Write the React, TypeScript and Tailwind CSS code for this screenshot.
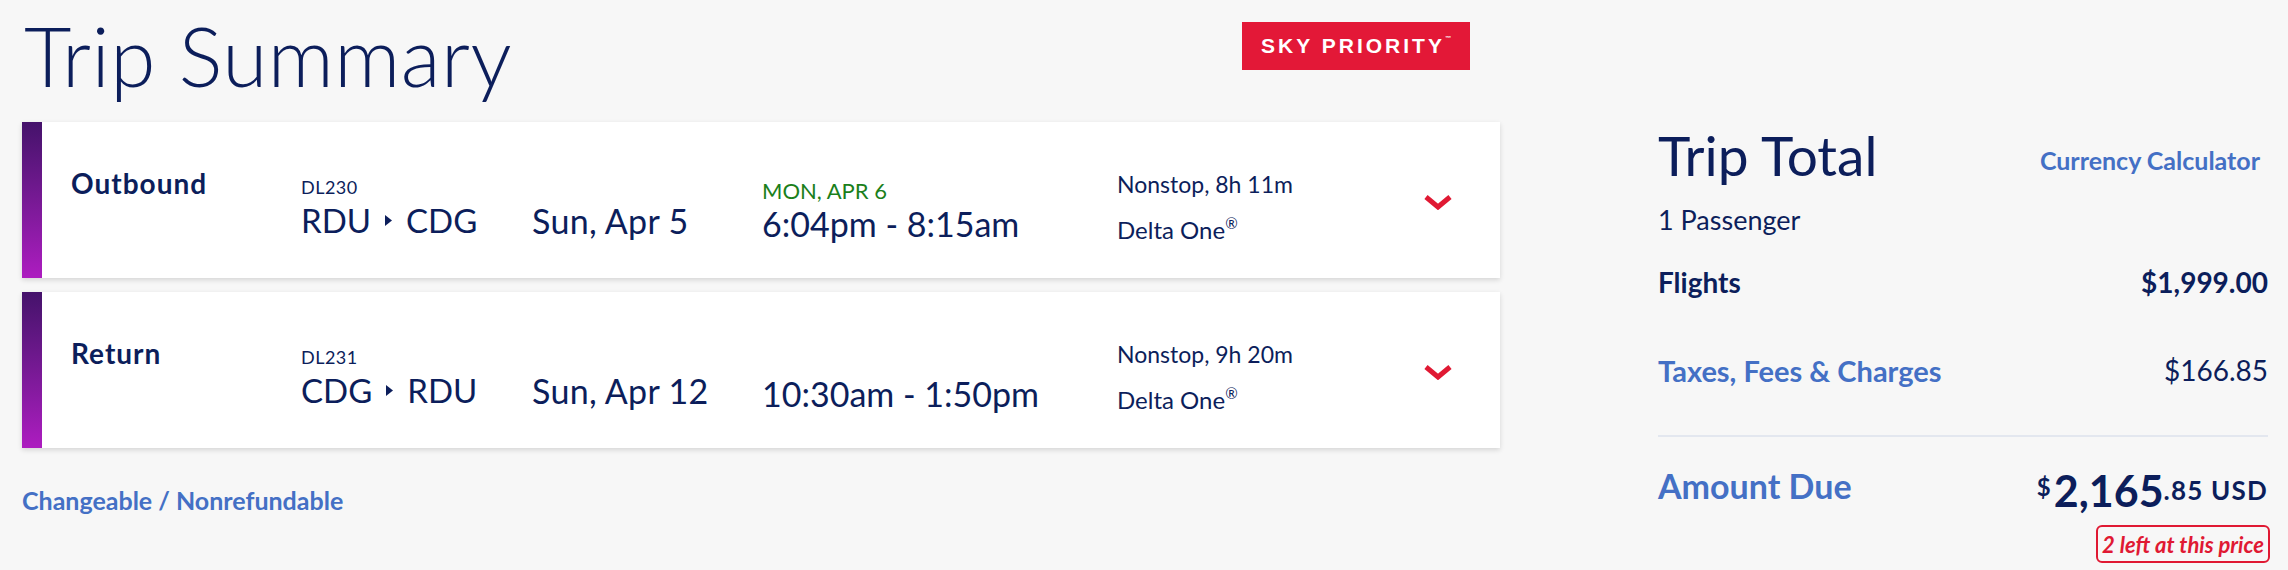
import React from "react";

function Chevron() {
  return (
    <svg width="30" height="16" viewBox="0 0 30 16">
      <polyline points="3,3 15,13 27,3" fill="none" stroke="#e01933" strokeWidth="5" strokeLinecap="butt" strokeLinejoin="miter" />
    </svg>
  );
}

function Arrow() {
  return (
    <svg width="7" height="11" viewBox="0 0 7 11" className="mx-[14px]">
      <polygon points="0,0 7,5.5 0,11" fill="#0c1e5b" />
    </svg>
  );
}

type CardProps = {
  label: string;
  flight: string;
  from: string;
  to: string;
  date: string;
  arrival?: string;
  time: string;
  info: string;
};

function FlightCard({ label, flight, from, to, date, arrival, time, info }: CardProps) {
  return (
    <div className="h-[156px] bg-white flex shadow-[0_2px_5px_rgba(0,0,0,0.14)]">
      <div className="w-[20px] shrink-0 bg-linear-to-b from-[#45126b] to-[#ad1cc0]" />
      <div className="ml-[29px] w-[230px] pt-[47px] text-[28px] leading-none font-bold tracking-[1px]">{label}</div>
      <div className="w-[231px] pt-[56px]">
        <div className="text-[18px] leading-none tracking-[0.5px]">{flight}</div>
        <div className="mt-[8px] text-[33px] leading-none flex items-center">
          <span>{from}</span>
          <Arrow />
          <span>{to}</span>
        </div>
      </div>
      <div className="w-[230px] pt-[82px] text-[34px] leading-none tracking-[0.3px]">{date}</div>
      <div className={arrival ? "w-[355px] pt-[58px]" : "w-[355px] pt-[85px]"}>
        {arrival && <div className="text-[22px] leading-none text-[#1b7f1b]">{arrival}</div>}
        <div className={arrival ? "mt-[5px] text-[34px] leading-none" : "text-[34px] leading-none"}>{time}</div>
      </div>
      <div className="w-[306px] pt-[51px]">
        <div className="text-[23px] leading-none">{info}</div>
        <div className="mt-[22px] text-[24px] leading-none">
          Delta One<span className="text-[15px] align-top relative top-[-2px]">®</span>
        </div>
      </div>
      <div className="pt-[72px]">
        <Chevron />
      </div>
    </div>
  );
}

export default function App() {
  return (
    <div className="w-[2288px] h-[570px] bg-[#f7f7f7] flex overflow-hidden text-[#0c1e5b] font-['Lato','Noto_Sans',sans-serif]">
      <div className="w-[1500px] shrink-0 pl-[22px] flex flex-col">
        <div className="h-[122px] flex items-start">
          <h1 className="pt-[14px] pl-[2px] text-[82px] leading-none font-light tracking-[0.5px]">Trip Summary</h1>
          <div className="ml-auto mr-[30px] mt-[22px] h-[48px] w-[228px] bg-[#e31837] flex items-center justify-center text-white font-bold text-[21px] tracking-[3px] font-['Liberation_Sans',sans-serif]">
            SKY PRIORITY<span className="text-[6px] self-start mt-[12px] tracking-normal">™</span>
          </div>
        </div>
        <FlightCard
          label="Outbound"
          flight="DL230"
          from="RDU"
          to="CDG"
          date="Sun, Apr 5"
          arrival="MON, APR 6"
          time="6:04pm - 8:15am"
          info="Nonstop, 8h 11m"
        />
        <div className="mt-[14px]">
          <FlightCard
            label="Return"
            flight="DL231"
            from="CDG"
            to="RDU"
            date="Sun, Apr 12"
            time="10:30am - 1:50pm"
            info="Nonstop, 9h 20m"
          />
        </div>
        <div className="mt-[40px] text-[25px] leading-none font-bold text-[#4470c5]">Changeable / Nonrefundable</div>
      </div>

      <div className="ml-[158px] w-[610px] shrink-0 flex flex-col">
        <div className="pt-[128px] flex items-start justify-between">
          <div className="text-[55px] leading-none">Trip Total</div>
          <div className="mt-[20px] mr-[8px] text-[25px] leading-none font-bold text-[#4470c5]">Currency Calculator</div>
        </div>
        <div className="mt-[23px] text-[27px] leading-none">1 Passenger</div>
        <div className="mt-[35px] flex justify-between text-[28px] leading-none font-bold">
          <span>Flights</span>
          <span>$1,999.00</span>
        </div>
        <div className="mt-[60px] flex justify-between text-[28px] leading-none">
          <span className="font-bold text-[#4470c5] text-[29px]">Taxes, Fees &amp; Charges</span>
          <span>$166.85</span>
        </div>
        <div className="mt-[50px] h-[2px] bg-[#e3e7ef]" />
        <div className="pt-[32px] flex justify-between items-start">
          <span className="text-[34px] leading-none font-bold text-[#4470c5]">Amount Due</span>
          <div className="flex flex-col items-end">
            <div className="flex items-start font-bold">
              <span className="mt-[6px] mr-[3px] text-[24px] leading-none">$</span>
              <span className="text-[43px] leading-none">2,165</span>
              <span className="mt-[8px] text-[26px] leading-none tracking-[1.2px]">.85 USD</span>
            </div>
            <div className="mt-[13px] mr-[-2px] h-[38px] w-[174px] border-2 border-[#e01933] rounded-[6px] flex items-center justify-center text-[22px] italic font-bold text-[#e01933]">
              2 left at this price
            </div>
          </div>
        </div>
      </div>
    </div>
  );
}
